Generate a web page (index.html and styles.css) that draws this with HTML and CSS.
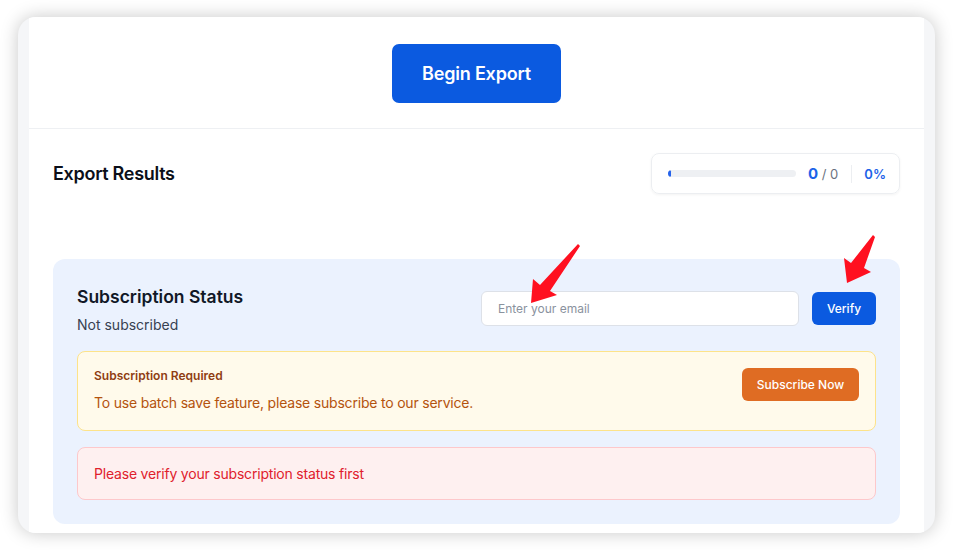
FILE: index.html
```html
<!DOCTYPE html>
<html lang="en">
<head>
  <meta charset="UTF-8" />
  <meta name="viewport" content="width=device-width, initial-scale=1.0"/>
  <title>Batch Export</title>
  <link rel="stylesheet" href="styles.css">
</head>
<body>

  <div class="window">
    <div class="content">

      <div class="export-top">
        <button class="begin-button">Begin Export</button>
      </div>

      <div class="results">
        <div class="results-header">
          <h2>Export Results</h2>
          <div class="progress-card">
            <div class="bar"><div class="bar-fill" style="width: 3px"></div></div>
            <div class="count"><span class="done">0</span> / 0</div>
            <div class="divider"></div>
            <div class="percent">0%</div>
          </div>
        </div>

        <!-- Subscription -->
        <div class="sub-card">
          <div class="sub-header">
            <div>
              <h3>Subscription Status</h3>
              <p class="sub-state">Not subscribed</p>
            </div>
            <div class="verify-group">
              <input type="email" class="email-input" placeholder="Enter your email">
              <button class="verify-button">Verify</button>
            </div>
          </div>

          <div class="notice notice-warn">
            <div>
              <div class="notice-title">Subscription Required</div>
              <p>To use batch save feature, please subscribe to our service.</p>
            </div>
            <button class="subscribe-button">Subscribe Now</button>
          </div>

          <div class="notice notice-error">
            <p>Please verify your subscription status first</p>
          </div>
        </div>
      </div>

    </div>
  </div>

  <!-- annotation arrows -->
  <svg class="arrows" width="953" height="552" viewBox="0 0 953 552">
    <polygon points="531,303 533,279 540,285 578,244 580,246 550,291 557,295" fill="#ff1020"/>
    <polygon points="847,283 844,258 851,263 873,235 875,237 864,268 871,272" fill="#ff1020"/>
  </svg>

</body>
</html>
```

FILE: styles.css
```css
body {
  margin: 0;
  background: #ffffff;
  font-family: Inter, "Noto Sans", sans-serif;
  color: #111827;
}

.window {
  margin: 17px 18px;
  height: 516px;
  box-sizing: border-box;
  padding: 0 11px;
  background: #f5f6f8;
  border-radius: 18px;
  box-shadow: 0 0 18px rgba(0,0,0,0.22);
  overflow: hidden;
}

.content {
  background: #fff;
  height: 100%;
}

.export-top {
  height: 112px;
  box-sizing: border-box;
  padding-top: 27px;
  display: flex;
  justify-content: center;
  border-bottom: 1px solid #eef0f3;
}

.begin-button {
  width: 169px;
  height: 59px;
  background: #0b5ae0;
  color: #fff;
  border: none;
  border-radius: 7px;
  font-family: inherit;
  font-size: 18px;
  font-weight: 600;
  letter-spacing: -0.2px;
}

.results {
  padding: 24px 24px 0;
}

.results-header {
  display: flex;
  justify-content: space-between;
  align-items: center;
}

.results-header h2 {
  margin: 0;
  font-size: 18px;
  font-weight: 600;
  letter-spacing: -0.3px;
  color: #0b0f19;
}

.progress-card {
  width: 249px;
  height: 41px;
  box-sizing: border-box;
  padding: 0 16px;
  display: flex;
  align-items: center;
  border: 1px solid #eceef1;
  border-radius: 8px;
  box-shadow: 0 1px 3px rgba(0,0,0,0.05);
  white-space: nowrap;
}

.bar {
  width: 128px;
  flex-shrink: 0;
  height: 7px;
  background: #eef0f3;
  border-radius: 4px;
  overflow: hidden;
}

.bar-fill {
  height: 100%;
  background: #2563eb;
  border-radius: 4px;
}

.count {
  margin-left: 12px;
  font-size: 13px;
  color: #6b7280;
}

.count .done {
  font-size: 15px;
  font-weight: 700;
  color: #1d63e8;
}

.divider {
  width: 1px;
  height: 18px;
  flex-shrink: 0;
  background: #eceef1;
  margin: 0 12px 0 13px;
}

.percent {
  font-size: 13px;
  font-weight: 600;
  color: #1d63e8;
}

.sub-card {
  margin-top: 65px;
  background: #ebf2fe;
  border-radius: 12px;
  padding: 26px 24px 24px;
}

.sub-header {
  display: flex;
  justify-content: space-between;
  align-items: flex-start;
}

.sub-header h3 {
  margin: 0;
  font-size: 17.5px;
  line-height: 24px;
  font-weight: 600;
  color: #111827;
}

.sub-state {
  margin: 6px 0 0;
  font-size: 14px;
  line-height: 20px;
  color: #374151;
}

.verify-group {
  display: flex;
  align-items: center;
  gap: 13px;
  margin-top: 6px;
}

.email-input {
  width: 318px;
  height: 35px;
  box-sizing: border-box;
  padding: 0 16px;
  border: 1px solid #dde1e8;
  border-radius: 6px;
  background: #fff;
  font-family: inherit;
  font-size: 12px;
  outline: none;
}

.email-input::placeholder {
  color: #8a929e;
}

.verify-button {
  width: 64px;
  height: 33px;
  background: #0b5ae0;
  color: #fff;
  border: none;
  border-radius: 6px;
  font-family: inherit;
  font-size: 12px;
  font-weight: 500;
}

.notice {
  margin-top: 16px;
  padding: 16px 16px 17px;
  border-radius: 8px;
  display: flex;
  justify-content: space-between;
  align-items: flex-start;
}

.notice p {
  margin: 0;
  font-size: 14px;
  line-height: 20px;
  letter-spacing: -0.2px;
}

.notice-warn {
  background: #fffaeb;
  border: 1px solid #fde38a;
}

.notice-warn .notice-title {
  font-size: 12px;
  line-height: 16px;
  font-weight: 600;
  color: #8f3d12;
}

.notice-warn p {
  margin-top: 9px;
  color: #b4530e;
}

.subscribe-button {
  width: 117px;
  height: 33px;
  background: #df6c23;
  color: #fff;
  border: none;
  border-radius: 6px;
  font-family: inherit;
  font-size: 12px;
  font-weight: 500;
}

.notice-error {
  background: #fef0f0;
  border: 1px solid #fdc8cb;
  padding: 16px 16px 15px;
}

.notice-error p {
  color: #e0202c;
}

.arrows {
  position: absolute;
  top: 0;
  left: 0;
  pointer-events: none;
}
```
